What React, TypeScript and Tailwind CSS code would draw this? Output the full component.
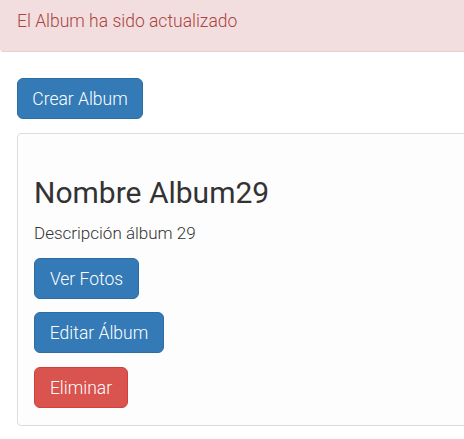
const btnBlue =
  "flex h-[41px] items-center justify-center rounded-[6px] border border-[#2e6da4] bg-[#337ab7] pt-[2px] text-[17.5px] font-light text-white";

const App = () => {
  return (
    <div
      className="h-[439px] w-[464px] overflow-hidden bg-white"
      style={{ fontFamily: "Roboto, 'Liberation Sans', sans-serif" }}
    >
      <div className="h-[52px] w-[480px] rounded-b-[4px] border-b border-[#ebccd1] bg-[#f2dede] pl-[17px] pt-[10px] text-[17.5px] font-light leading-[23px] text-[#a94442]">
        El Album ha sido actualizado
      </div>

      <div className="pl-[17px] pt-[26px]">
        <div className="flex">
          <button className={`${btnBlue} w-[126px]`}>Crear Album</button>
        </div>

        <div className="mt-[14px] w-[480px] rounded-[4px] border border-[#ddd] bg-[#fdfdfd] px-4 pb-[17px] pt-[42px]">
          <h2 className="text-[30px] leading-[33px] text-[#333]">Nombre Album29</h2>
          <p className="mt-[12px] text-[17px] font-light leading-[24px] text-[#333]">Descripción álbum 29</p>

          <div className="mt-[13px] flex flex-col items-start gap-[13px]">
            <button className={`${btnBlue} w-[105px]`}>Ver Fotos</button>
            <button className={`${btnBlue} w-[130px]`}>Editar Álbum</button>
            <button className="mt-px flex h-[41px] w-[94px] items-center justify-center rounded-[6px] border border-[#d43f3a] bg-[#d9534f] pt-[2px] text-[17.5px] font-light text-white">
              Eliminar
            </button>
          </div>
        </div>
      </div>
    </div>
  );
};

export default App;
